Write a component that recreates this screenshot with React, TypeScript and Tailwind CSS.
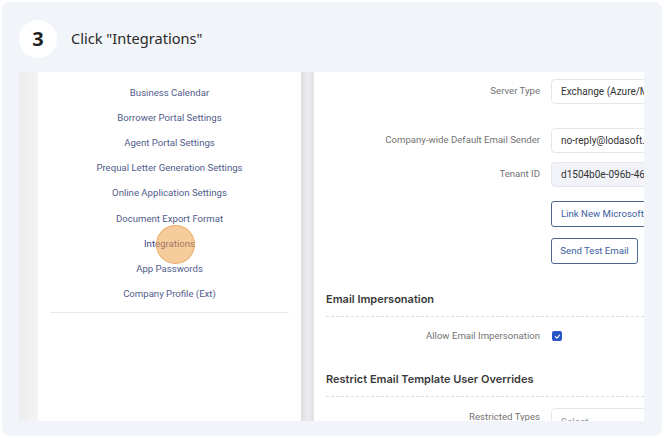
import React from 'react';

const menuItems = [
  'Application Settings Manager',
  'Business Calendar',
  'Borrower Portal Settings',
  'Agent Portal Settings',
  'Prequal Letter Generation Settings',
  'Online Application Settings',
  'Document Export Format',
  'Integrations',
  'App Passwords',
  'Company Profile (Ext)',
];

const labelCls = "w-[237px] shrink-0 text-right pr-[11px] text-[9.6px] text-[#737373] whitespace-nowrap";
const inputCls = "h-[25px] w-[140px] shrink-0 rounded-[4px] border border-[#e3e6ec] px-[9px] flex items-center text-[10px] text-[#333] whitespace-nowrap overflow-hidden";
const headingFont = { fontFamily: 'Inter, "Noto Sans", sans-serif' };

const App: React.FC = () => {
  return (
    <div className="w-[666px] h-[438px] bg-white p-[2px]" style={{ fontFamily: 'Roboto, "Liberation Sans", sans-serif' }}>
      <div className="w-[660px] h-[434px] rounded-[8px] bg-[#f1f4f9] px-[17px] flex flex-col">
        <div className="h-[70px] pt-[18px] flex items-start shrink-0">
          <div className="flex items-center gap-[14px]">
            <div className="w-[38px] h-[38px] rounded-full bg-white flex items-center justify-center text-[20px] font-bold text-[#1f1f1f]" style={{ fontFamily: '"Noto Sans", sans-serif' }}>
              3
            </div>
            <span className="text-[14.6px] text-[#2a2a2a]" style={{ fontFamily: '"Noto Sans", sans-serif' }}>Click "Integrations"</span>
          </div>
        </div>

        <div className="h-[349px] w-[625px] flex overflow-hidden">
          <div className="w-[19px] shrink-0 bg-gradient-to-r from-[#ececec] to-[#f4f4f4]" />

          <div className="w-[263px] shrink-0 bg-white relative">
            <div className="-mt-[17px] flex flex-col">
              {menuItems.map(item => (
                <div
                  key={item}
                  className={`h-[25.2px] flex items-center justify-center text-[9.6px] whitespace-nowrap ${
                    item === 'Integrations' ? 'text-[#35478a]' : 'text-[#525c8a]'
                  }`}
                >
                  {item}
                </div>
              ))}
            </div>
            <div className="mx-[12px] mt-[5px] border-t border-[#e8eaee]" />
            <div className="absolute left-[118px] top-[153px] w-[39px] h-[39px] rounded-full bg-[#f0a24a]/55 border border-[#e7a35a]/70" />
          </div>

          <div className="w-[13px] shrink-0 bg-gradient-to-r from-[#dedee0] via-[#ececee] to-[#e2e2e4]" />

          <div className="flex-1 bg-white pt-[7px] overflow-hidden">
            <div className="flex items-center">
              <div className={labelCls}>Server Type</div>
              <div className={inputCls}>Exchange (Azure/Microsoft 365)</div>
            </div>
            <div className="flex items-center mt-[24px]">
              <div className={labelCls}>Company-wide Default Email Sender</div>
              <div className={inputCls}>no-reply@lodasoft.com</div>
            </div>
            <div className="flex items-center mt-[9px]">
              <div className={labelCls}>Tenant ID</div>
              <div className={`${inputCls} bg-[#f1f3f8]`}>d1504b0e-096b-46c0-a1b2</div>
            </div>
            <div className="flex mt-[14px]">
              <div className="w-[237px] shrink-0" />
              <button className="h-[26px] shrink-0 rounded-[3px] border border-[#4d6890] px-[9px] text-[9.6px] text-[#3b5c9e] whitespace-nowrap">
                Link New Microsoft Account
              </button>
            </div>
            <div className="flex mt-[11px]">
              <div className="w-[237px] shrink-0" />
              <button className="h-[26px] w-[87px] shrink-0 rounded-[3px] border border-[#4d6890] text-[9.6px] text-[#3b5c9e] whitespace-nowrap">
                Send Test Email
              </button>
            </div>

            <div className="ml-[12px] mt-[27px] text-[11px] leading-[16px] font-semibold text-[#3a3a3a]" style={headingFont}>
              Email Impersonation
            </div>
            <div className="ml-[12px] mt-[9px] border-t border-dashed border-[#d9dce2]" />
            <div className="flex items-center mt-[12px]">
              <div className={labelCls}>Allow Email Impersonation</div>
              <div className="w-[10px] h-[10px] ml-[1px] rounded-[2px] bg-[#2856c6] flex items-center justify-center">
                <svg width="7" height="7" viewBox="0 0 10 10" fill="none">
                  <path d="M2 5.2 L4.2 7.2 L8 3" stroke="white" strokeWidth="1.6" strokeLinecap="round" strokeLinejoin="round" />
                </svg>
              </div>
            </div>

            <div className="ml-[12px] mt-[28px] text-[11px] leading-[16px] font-semibold text-[#3a3a3a]" style={headingFont}>
              Restrict Email Template User Overrides
            </div>
            <div className="ml-[12px] mt-[9px] border-t border-dashed border-[#d9dce2]" />
            <div className="flex items-start mt-[11px]">
              <div className={`${labelCls} pt-[2px]`}>Restricted Types</div>
              <div className={`${inputCls} items-start pt-[6px] text-[#999]`}>Select...</div>
            </div>
          </div>
        </div>
      </div>
    </div>
  );
};

export default App;
